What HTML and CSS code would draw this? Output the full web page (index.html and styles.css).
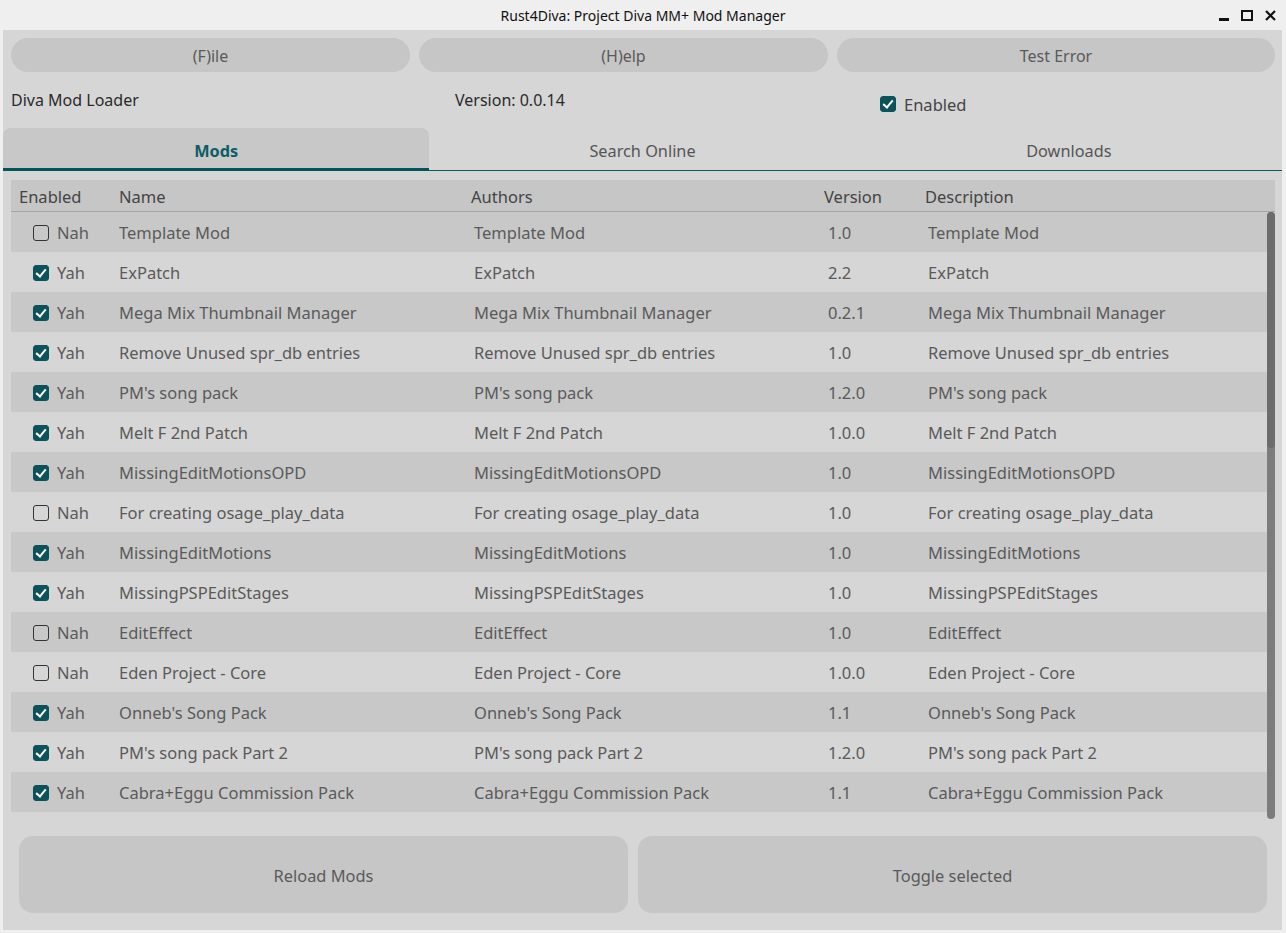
FILE: index.html
```html
<!DOCTYPE html>
<html>
<head>
<meta charset="utf-8">
<link rel="stylesheet" href="styles.css">
</head>
<body>
<div class="window">
  <div class="titlebar">
    <span class="title">Rust4Diva: Project Diva MM+ Mod Manager</span>
    <div class="controls">
      <span class="ctl min"></span>
      <span class="ctl max"></span>
      <svg class="ctl close" width="11" height="11" viewBox="0 0 11 11"><path d="M1 1L10 10M10 1L1 10" stroke="#111" stroke-width="2.2"/></svg>
    </div>
  </div>
  <div class="content">
    <div class="menu">
      <div class="btn">(F)ile</div>
      <div class="btn">(H)elp</div>
      <div class="btn">Test Error</div>
    </div>
    <div class="info">
      <span class="info-text">Diva Mod Loader</span>
      <span class="info-text">Version: 0.0.14</span>
      <span class="info-check"><span class="cb on"></span>Enabled</span>
    </div>
    <div class="tabs">
      <div class="tab active">Mods</div>
      <div class="tab">Search Online</div>
      <div class="tab">Downloads</div>
    </div>
    <div class="table">
      <div class="thead">
        <span class="c-en">Enabled</span>
        <span class="c-name">Name</span>
        <span class="c-auth">Authors</span>
        <span class="c-ver">Version</span>
        <span class="c-desc">Description</span>
      </div>
      <div class="tbody">
        <div class="row"><span class="c-en cell"><span class="cb"></span>Nah</span><span class="c-name">Template Mod</span><span class="c-auth">Template Mod</span><span class="c-ver">1.0</span><span class="c-desc">Template Mod</span></div>
        <div class="row"><span class="c-en cell"><span class="cb on"></span>Yah</span><span class="c-name">ExPatch</span><span class="c-auth">ExPatch</span><span class="c-ver">2.2</span><span class="c-desc">ExPatch</span></div>
        <div class="row"><span class="c-en cell"><span class="cb on"></span>Yah</span><span class="c-name">Mega Mix Thumbnail Manager</span><span class="c-auth">Mega Mix Thumbnail Manager</span><span class="c-ver">0.2.1</span><span class="c-desc">Mega Mix Thumbnail Manager</span></div>
        <div class="row"><span class="c-en cell"><span class="cb on"></span>Yah</span><span class="c-name">Remove Unused spr_db entries</span><span class="c-auth">Remove Unused spr_db entries</span><span class="c-ver">1.0</span><span class="c-desc">Remove Unused spr_db entries</span></div>
        <div class="row"><span class="c-en cell"><span class="cb on"></span>Yah</span><span class="c-name">PM's song pack</span><span class="c-auth">PM's song pack</span><span class="c-ver">1.2.0</span><span class="c-desc">PM's song pack</span></div>
        <div class="row"><span class="c-en cell"><span class="cb on"></span>Yah</span><span class="c-name">Melt F 2nd Patch</span><span class="c-auth">Melt F 2nd Patch</span><span class="c-ver">1.0.0</span><span class="c-desc">Melt F 2nd Patch</span></div>
        <div class="row"><span class="c-en cell"><span class="cb on"></span>Yah</span><span class="c-name">MissingEditMotionsOPD</span><span class="c-auth">MissingEditMotionsOPD</span><span class="c-ver">1.0</span><span class="c-desc">MissingEditMotionsOPD</span></div>
        <div class="row"><span class="c-en cell"><span class="cb"></span>Nah</span><span class="c-name">For creating osage_play_data</span><span class="c-auth">For creating osage_play_data</span><span class="c-ver">1.0</span><span class="c-desc">For creating osage_play_data</span></div>
        <div class="row"><span class="c-en cell"><span class="cb on"></span>Yah</span><span class="c-name">MissingEditMotions</span><span class="c-auth">MissingEditMotions</span><span class="c-ver">1.0</span><span class="c-desc">MissingEditMotions</span></div>
        <div class="row"><span class="c-en cell"><span class="cb on"></span>Yah</span><span class="c-name">MissingPSPEditStages</span><span class="c-auth">MissingPSPEditStages</span><span class="c-ver">1.0</span><span class="c-desc">MissingPSPEditStages</span></div>
        <div class="row"><span class="c-en cell"><span class="cb"></span>Nah</span><span class="c-name">EditEffect</span><span class="c-auth">EditEffect</span><span class="c-ver">1.0</span><span class="c-desc">EditEffect</span></div>
        <div class="row"><span class="c-en cell"><span class="cb"></span>Nah</span><span class="c-name">Eden Project - Core</span><span class="c-auth">Eden Project - Core</span><span class="c-ver">1.0.0</span><span class="c-desc">Eden Project - Core</span></div>
        <div class="row"><span class="c-en cell"><span class="cb on"></span>Yah</span><span class="c-name">Onneb's Song Pack</span><span class="c-auth">Onneb's Song Pack</span><span class="c-ver">1.1</span><span class="c-desc">Onneb's Song Pack</span></div>
        <div class="row"><span class="c-en cell"><span class="cb on"></span>Yah</span><span class="c-name">PM's song pack Part 2</span><span class="c-auth">PM's song pack Part 2</span><span class="c-ver">1.2.0</span><span class="c-desc">PM's song pack Part 2</span></div>
        <div class="row"><span class="c-en cell"><span class="cb on"></span>Yah</span><span class="c-name">Cabra+Eggu Commission Pack</span><span class="c-auth">Cabra+Eggu Commission Pack</span><span class="c-ver">1.1</span><span class="c-desc">Cabra+Eggu Commission Pack</span></div>
      </div>
      <div class="scroll"><div class="thumb"></div></div>
    </div>
    <div class="actions">
      <div class="big-btn">Reload Mods</div>
      <div class="big-btn">Toggle selected</div>
    </div>
  </div>
</div>
</body>
</html>
```

FILE: styles.css
```css
* { box-sizing: border-box; }
html, body { margin: 0; padding: 0; }
body {
  background: #efefef;
  font-family: "Noto Sans", "Open Sans", sans-serif;
  width: 1286px;
  height: 933px;
  overflow: hidden;
}
.window { display: flex; flex-direction: column; height: 933px; }
.titlebar {
  height: 30px;
  display: flex;
  align-items: center;
  justify-content: center;
  position: relative;
  background: #efefef;
}
.title { font-size: 14px; color: #111; }
.controls {
  position: absolute;
  right: 10px;
  top: 9px;
  display: flex;
  align-items: center;
  gap: 12px;
}
.ctl.min { width: 10px; height: 3px; background: #111; margin-top: 9px; }
.ctl.max { width: 12px; height: 11px; border: 2px solid #111; }
.ctl.close { display: block; }
.content {
  background: #d6d6d6;
  margin: 0 4px 3px 3px;
  flex: 1;
  display: flex;
  flex-direction: column;
}
.menu {
  display: grid;
  grid-template-columns: 399px 409px 1fr;
  column-gap: 9px;
  padding: 8px 7px 0 8px;
}
.btn {
  height: 34px;
  border-radius: 17px;
  background: #c6c6c6;
  color: #5a5a5a;
  font-size: 16px;
  display: flex;
  align-items: center;
  justify-content: center;
  padding-top: 2px;
}
.info {
  height: 56px;
  display: grid;
  grid-template-columns: 444px 425px 1fr;
  align-items: center;
  padding-left: 8px;
  color: #2a2a2a;
  font-size: 16px;
}
.info-text { padding-bottom: 1px; }
.info-check { display: flex; align-items: center; gap: 8px; padding-top: 8px; font-size: 16.5px; color: #444; }
.tabs {
  display: flex;
  height: 43px;
  border-bottom: 1px solid #0d5a61;
}
.tab {
  flex: 1;
  display: flex;
  align-items: center;
  justify-content: center;
  font-size: 16.3px;
  color: #555;
  padding-top: 3px;
}
.tab.active {
  background: #c8c8c8;
  border-radius: 8px 8px 0 0;
  color: #0e5c66;
  font-weight: 700;
  box-shadow: inset 0 -3px 0 #04525a;
  margin-bottom: -1px;
}
.table {
  margin: 9px 7px 0 8px;
  position: relative;
}
.thead {
  height: 32px;
  background: #c6c6c6;
  border-bottom: 1px solid #a6a6a6;
  display: flex;
  align-items: center;
  font-size: 16.5px;
  color: #444;
  padding-top: 2px;
}
.thead .c-en { padding-left: 8px; }
.tbody { margin-right: 8px; }
.row {
  height: 40px;
  display: flex;
  align-items: center;
  font-size: 16.5px;
  color: #5a5a5a;
  padding-top: 1px;
}
.row:nth-child(odd) { background: #c8c8c8; }
.row:nth-child(even) { background: #d6d6d6; }
.c-en { width: 108px; flex: none; }
.c-name { width: 352px; flex: none; }
.c-auth { width: 353px; flex: none; }
.c-ver { width: 101px; flex: none; }
.c-desc { flex: 1; }
.row .c-auth { padding-left: 3px; }
.row .c-ver { padding-left: 4px; }
.row .c-desc { padding-left: 3px; }
.cell { display: flex; align-items: center; gap: 8px; padding-left: 22px; }
.cb {
  width: 16px;
  height: 16px;
  border-radius: 3px;
  border: 1.5px solid #333;
  display: inline-block;
  position: relative;
  flex: none;
}
.cb.on {
  background: #0b525a;
  border-color: #0b525a;
}
.cb.on::after {
  content: "";
  position: absolute;
  left: 4px;
  top: 1px;
  width: 4px;
  height: 8px;
  border: solid #fff;
  border-width: 0 2px 2px 0;
  transform: rotate(40deg);
}
.scroll {
  position: absolute;
  right: 0;
  top: 32px;
  width: 8px;
  height: 607px;
  background: #7c7c7c;
  border-radius: 4px;
}
.thumb {
  height: 236px;
  background: #6c6c6c;
  border-radius: 4px;
}
.actions {
  display: grid;
  grid-template-columns: 609px 1fr;
  column-gap: 10px;
  padding: 24px 15px 0 16px;
}
.big-btn {
  height: 77px;
  border-radius: 14px;
  background: #c6c6c6;
  color: #5a5a5a;
  font-size: 16.4px;
  display: flex;
  align-items: center;
  justify-content: center;
  padding-top: 2px;
}
```
